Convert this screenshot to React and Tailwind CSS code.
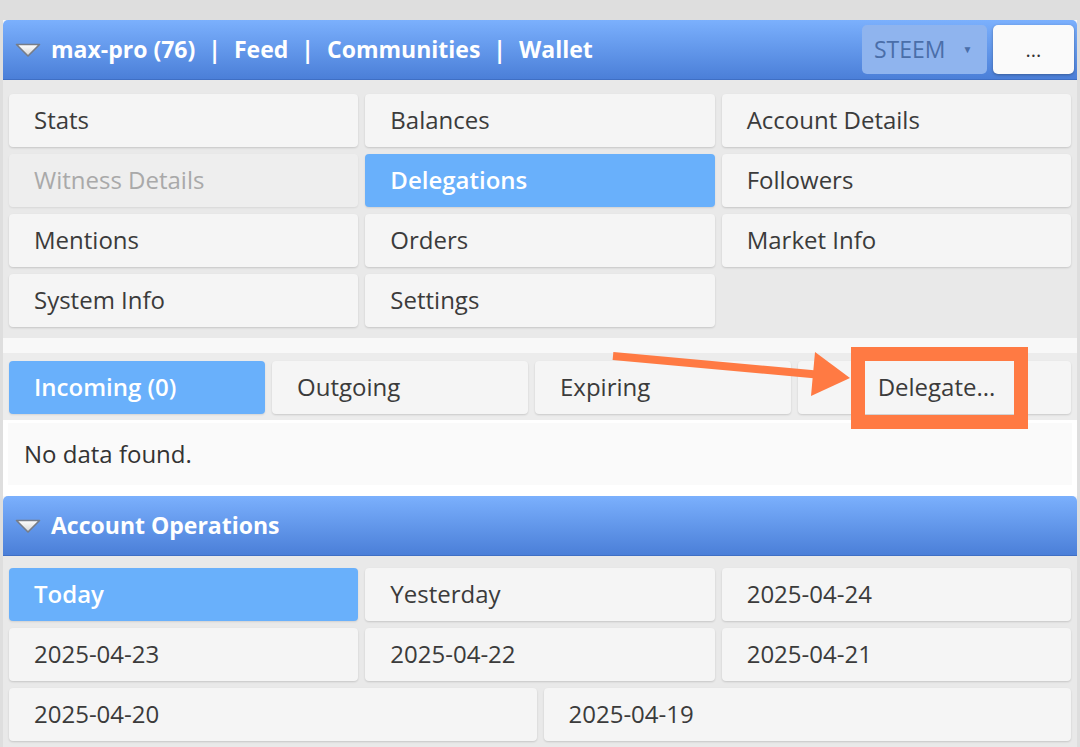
import React from 'react';

const menuItems = [
  { label: 'Stats' },
  { label: 'Balances' },
  { label: 'Account Details' },
  { label: 'Witness Details', disabled: true },
  { label: 'Delegations', active: true },
  { label: 'Followers' },
  { label: 'Mentions' },
  { label: 'Orders' },
  { label: 'Market Info' },
  { label: 'System Info' },
  { label: 'Settings' },
];

const tabs = [
  { label: 'Incoming (0)', active: true },
  { label: 'Outgoing' },
  { label: 'Expiring' },
  { label: 'Delegate...', center: true },
];

const navLinks = ['max-pro (76)', 'Feed', 'Communities', 'Wallet'];

function Triangle() {
  return (
    <svg width="26" height="16" viewBox="0 0 26 16" className="shrink-0">
      <defs>
        <linearGradient id="tri" x1="0" y1="0" x2="0" y2="1">
          <stop offset="0" stopColor="#ffffff" />
          <stop offset="1" stopColor="#d4d4d4" />
        </linearGradient>
      </defs>
      <path d="M1.5 2.5 L24.5 2.5 L13 14 Z" fill="url(#tri)" stroke="#777d88" strokeWidth="1.6" strokeLinejoin="round" />
    </svg>
  );
}

// one button of a grid
function Tile({ label, active, disabled, center }) {
  let cls = 'bg-[#f5f5f5] text-[#3b3b3b] shadow-[0_1px_2px_rgba(0,0,0,0.15)]';
  if (active) cls = 'bg-[#69b0fb] text-white font-semibold shadow-[0_1px_2px_rgba(0,0,0,0.1)]';
  if (disabled) cls = 'bg-[#eeeeee] text-[#a9a9a9] shadow-[0_1px_2px_rgba(0,0,0,0.08)]';
  return (
    <div
      className={`h-[53px] rounded-[4px] flex items-center pb-[1px] text-[24px] ${center ? 'justify-center pl-[4px]' : 'pl-[25px]'} ${cls}`}
    >
      {label}
    </div>
  );
}

function SectionHeader({ children }) {
  return (
    <div className="h-[60px] rounded-t-[5px] bg-gradient-to-b from-[#7bb0fd] to-[#4b7fd8] border-b border-[#3f6fc4] flex items-center pl-[12px] pr-[3px]">
      <Triangle />
      <div className="ml-[10px] flex-1 text-white font-bold text-[23px]">{children}</div>
    </div>
  );
}

export default function App() {
  return (
    <div
      className="relative min-h-screen bg-[#dedede] pt-[20px] pl-[3px] pr-[3px]"
      style={{ fontFamily: '"Open Sans", "Noto Sans", sans-serif' }}
    >
      <div className="bg-[#f7f7f7]">
        <SectionHeader>
          <div className="flex items-center">
            <div className="flex-1 flex items-center">
              {navLinks.map((l, i) => (
                <React.Fragment key={l}>
                  {i > 0 && <span className="mx-[13px]">|</span>}
                  <span>{l}</span>
                </React.Fragment>
              ))}
            </div>
            <div className="h-[49px] w-[125px] rounded-[5px] bg-[#8fb4ee] flex items-center pl-[12px] text-[#4a6ea9] font-normal text-[23px]">
              STEEM
              <span className="ml-[17px] text-[10px]">▼</span>
            </div>
            <div className="ml-[6px] h-[49px] w-[81px] rounded-[5px] bg-[#fafafa] shadow-[0_1px_3px_rgba(0,0,0,0.3)] flex items-center justify-center text-[#333] font-normal text-[20px]">
              ...
            </div>
          </div>
        </SectionHeader>

        <div className="bg-[#e9e9e9] pt-[14px] pb-[11px] px-[6px] grid grid-cols-3 gap-x-[7px] gap-y-[7px]">
          {menuItems.map((m, i) => (
            <Tile key={i} {...m} />
          ))}
        </div>

        <div className="h-[15px] bg-[#f8f8f8]" />

        <div className="bg-[#ececec] pt-[8px] pb-[6px] px-[6px] grid grid-cols-[256px_256px_256px_1fr] gap-x-[7px]">
          {tabs.map((t, i) => (
            <Tile key={i} {...t} />
          ))}
        </div>

        <div className="bg-white px-[5px] pt-[3px] pb-[11px]">
          <div className="h-[62px] bg-[#fafafa] flex items-center pl-[16px] pb-[1px] text-[24px] text-[#333]">No data found.</div>
        </div>

        <SectionHeader>Account Operations</SectionHeader>

        <div className="bg-[#e9e9e9] pt-[12px] pb-[6px] px-[6px] flex flex-col gap-y-[7px]">
          <div className="grid grid-cols-3 gap-x-[7px]">
            <Tile label="Today" active />
            <Tile label="Yesterday" />
            <Tile label="2025-04-24" />
          </div>
          <div className="grid grid-cols-3 gap-x-[7px]">
            <Tile label="2025-04-23" />
            <Tile label="2025-04-22" />
            <Tile label="2025-04-21" />
          </div>
          <div className="grid grid-cols-2 gap-x-[7px]">
            <Tile label="2025-04-20" />
            <Tile label="2025-04-19" />
          </div>
        </div>
      </div>

      {/* orange annotation drawn over the page */}
      <svg className="absolute left-0 top-0 pointer-events-none" width="1080" height="747" viewBox="0 0 1080 747">
        <line x1="613" y1="356" x2="822" y2="375" stroke="#ff7a43" strokeWidth="8" />
        <polygon points="815,352 850,378 811,396" fill="#ff7a43" />
        <rect x="858" y="354" width="163" height="68" fill="none" stroke="#ff7a43" strokeWidth="14" />
      </svg>
    </div>
  );
}
